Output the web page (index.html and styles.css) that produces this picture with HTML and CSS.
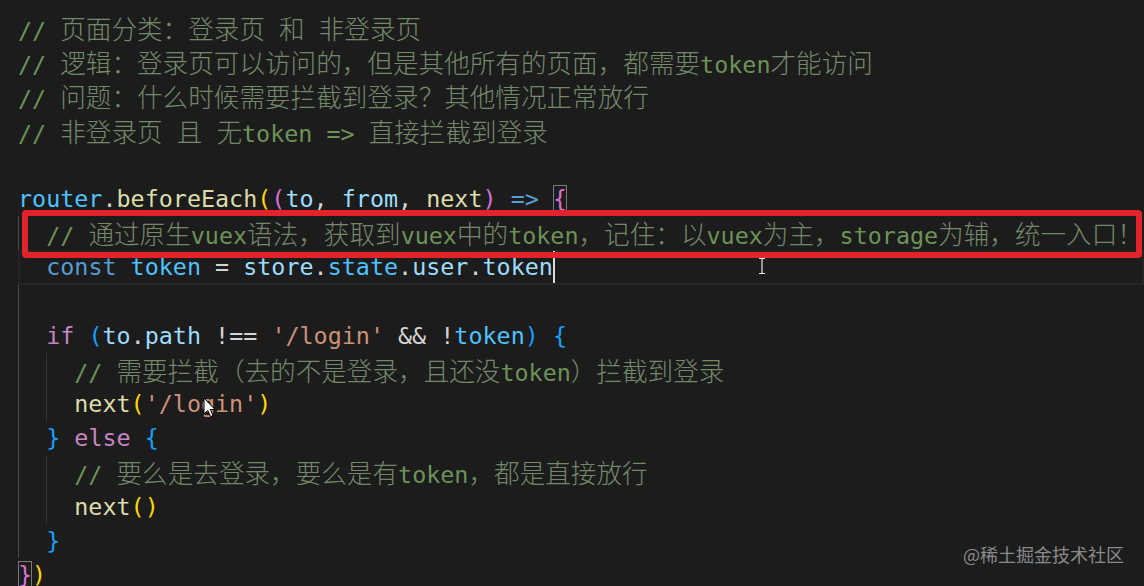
FILE: index.html
```html
<!DOCTYPE html>
<html lang="zh">
<head>
<meta charset="utf-8">
<title>router.beforeEach</title>
<link rel="stylesheet" href="styles.css">
</head>
<body>
<div class="code">
<div class="ln c">// <span class="z">页面分类：登录页</span> <span class="z">和</span> <span class="z">非登录页</span></div>
<div class="ln c">// <span class="z">逻辑：登录页可以访问的，但是其他所有的页面，都需要</span>token<span class="z">才能访问</span></div>
<div class="ln c">// <span class="z">问题：什么时候需要拦截到登录？其他情况正常放行</span></div>
<div class="ln c">// <span class="z">非登录页</span> <span class="z">且</span> <span class="z">无</span>token =&gt; <span class="z">直接拦截到登录</span></div>
<div class="ln"> </div>
<div class="ln"><span class="b">router</span>.<span class="f">beforeEach</span><span class="g1">(</span><span class="g2">(</span><span class="v">to</span>, <span class="v">from</span>, <span class="f">next</span><span class="g2">)</span> <span class="k">=&gt;</span> <span class="g2 match">{</span></div>
<div class="guide">
<div class="ln c">  // <span class="z">通过原生</span>vuex<span class="z">语法，获取到</span>vuex<span class="z">中的</span>token<span class="z">，记住：以</span>vuex<span class="z">为主，</span>storage<span class="z">为辅，统一入口！</span></div>
<div class="ln cur">  <span class="k">const</span> <span class="b">token</span> = <span class="v">store</span>.<span class="b">state</span>.<span class="v">user</span>.<span class="v">token</span><span class="caret"></span></div>
<div class="ln"> </div>
<div class="ln">  <span class="p">if</span> <span class="g3">(</span><span class="v">to</span>.<span class="v">path</span> !== <span class="s">'/login'</span> &amp;&amp; !<span class="b">token</span><span class="g3">)</span> <span class="g3">{</span></div>
<div class="guide inner">
<div class="ln c">  // <span class="z">需要拦截（去的不是登录，且还没</span>token<span class="z">）拦截到登录</span></div>
<div class="ln">  <span class="f">next</span><span class="g1">(</span><span class="s">'/login'</span><span class="g1">)</span></div>
</div>
<div class="ln">  <span class="g3">}</span> <span class="p">else</span> <span class="g3">{</span></div>
<div class="guide inner">
<div class="ln c">  // <span class="z">要么是去登录，要么是有</span>token<span class="z">，都是直接放行</span></div>
<div class="ln">  <span class="f">next</span><span class="g1">()</span></div>
</div>
<div class="ln">  <span class="g3">}</span></div>
</div>
<div class="ln"><span class="g2 match">}</span><span class="g1">)</span></div>
</div>

<div class="annot"></div>

<svg class="ibeam" width="8" height="16" viewBox="0 0 8 16">
  <path d="M1 0.5 H7 M4 0.5 V15.5 M1 15.5 H7" stroke="#e8e8e8" stroke-width="1.2" fill="none"/>
</svg>

<svg class="arrow" width="13" height="21" viewBox="0 0 13 21">
  <path d="M1 1 L1 17 L4.8 13.4 L7.6 19.6 L10 18.6 L7.3 12.5 L12 12.5 Z" fill="#ffffff" stroke="#000000" stroke-width="1" stroke-linejoin="round"/>
</svg>

<div class="wm">@稀土掘金技术社区</div>
</body>
</html>
```

FILE: styles.css
```css
html, body {
  margin: 0;
  padding: 0;
}

body {
  width: 1144px;
  height: 586px;
  overflow: hidden;
  position: relative;
  background: #1c1c1c;
}

.code {
  padding: 11px 0 0 18px;
  font-family: "DejaVu Sans Mono", "Liberation Mono", monospace;
  font-size: 23.39px;
  color: #d4d4d4;
}

.ln {
  height: 34.2px;
  line-height: 34.2px;
  white-space: pre;
  overflow: visible;
}

.z {
  font-family: "Noto Sans CJK SC", "Noto Sans CJK JP", sans-serif;
  font-size: 25.6px;
  font-weight: 300;
}

/* syntax colours */
.c { color: #6c9357; }
.c .z { color: #74896a; }
.v { color: #9cdcfe; }
.b { color: #4fc1ff; }
.f { color: #dcdcaa; }
.k { color: #569cd6; }
.p { color: #c586c0; }
.s { color: #ce9178; }
.g1 { color: #ffd700; }
.g2 { color: #da70d6; }
.g3 { color: #179fff; }

.match {
  box-shadow: inset 0 0 0 1px #7a7a7a;
}

/* indent guides */
.guide {
  box-shadow: inset 1px 0 0 #4a4a4a;
}

.guide.inner {
  margin-left: 2ch;
  box-shadow: inset 1px 0 0 #353535;
}

.cur {
  box-shadow: inset 0 0 0 2px #252525;
}

.caret {
  display: inline-block;
  width: 2px;
  height: 32px;
  margin-right: -2px;
  vertical-align: top;
  margin-top: 1px;
  background: #d8d8d8;
}

/* annotation overlay */
.annot {
  position: absolute;
  left: 22px;
  top: 210px;
  width: 1120px;
  height: 48px;
  box-sizing: border-box;
  border: 6px solid #e3232a;
  border-radius: 4px;
}

.ibeam {
  position: absolute;
  left: 758px;
  top: 258px;
}

.arrow {
  position: absolute;
  left: 203px;
  top: 397px;
}

.wm {
  position: absolute;
  left: 963px;
  top: 544px;
  font-family: "Noto Sans CJK SC", sans-serif;
  font-size: 18px;
  line-height: 20px;
  color: #8a8a8a;
  white-space: nowrap;
}
```
